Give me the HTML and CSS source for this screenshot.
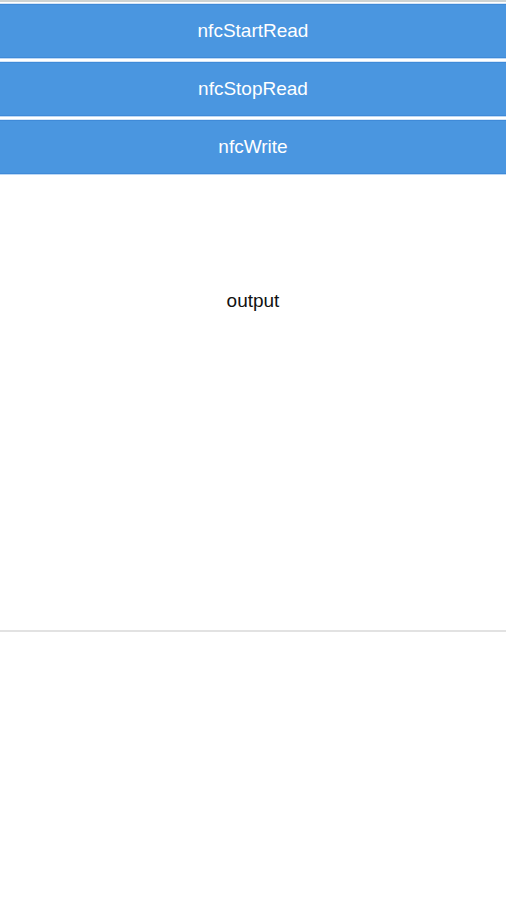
FILE: index.html
```html
<!DOCTYPE html>
<html>
<head>
<meta charset="utf-8">
<link rel="stylesheet" href="styles.css">
</head>
<body>
<div class="topline"></div>
<div class="buttons">
  <button class="btn">nfcStartRead</button>
  <button class="btn">nfcStopRead</button>
  <button class="btn">nfcWrite</button>
</div>
<div class="output">output</div>
</body>
</html>
```
FILE: styles.css
```css
html, body {
  margin: 0;
  padding: 0;
  background: #ffffff;
}
body {
  font-family: "Liberation Sans", Arial, sans-serif;
  width: 506px;
}
.topline {
  height: 2px;
  background: #cdd3d3;
}
.buttons {
  display: flex;
  flex-direction: column;
  gap: 4px;
  padding-top: 2px;
}
.btn {
  display: block;
  width: 100%;
  height: 54px;
  margin: 0;
  padding: 0;
  border: none;
  border-top: 1px solid #3f8ad8;
  border-bottom: 1px solid #3f8ad8;
  background: #4a96e0;
  color: #ffffff;
  font-family: "Liberation Sans", Arial, sans-serif;
  font-size: 19px;
  text-align: center;
  box-shadow: 0 1px 0 #bcd8f5, 0 -1px 0 #d5e6f8;
}
.output {
  box-sizing: border-box;
  height: 458px;
  padding-top: 116px;
  text-align: center;
  font-size: 19px;
  line-height: 22px;
  color: #111111;
  border-bottom: 2px solid #e2e2e2;
}
```
